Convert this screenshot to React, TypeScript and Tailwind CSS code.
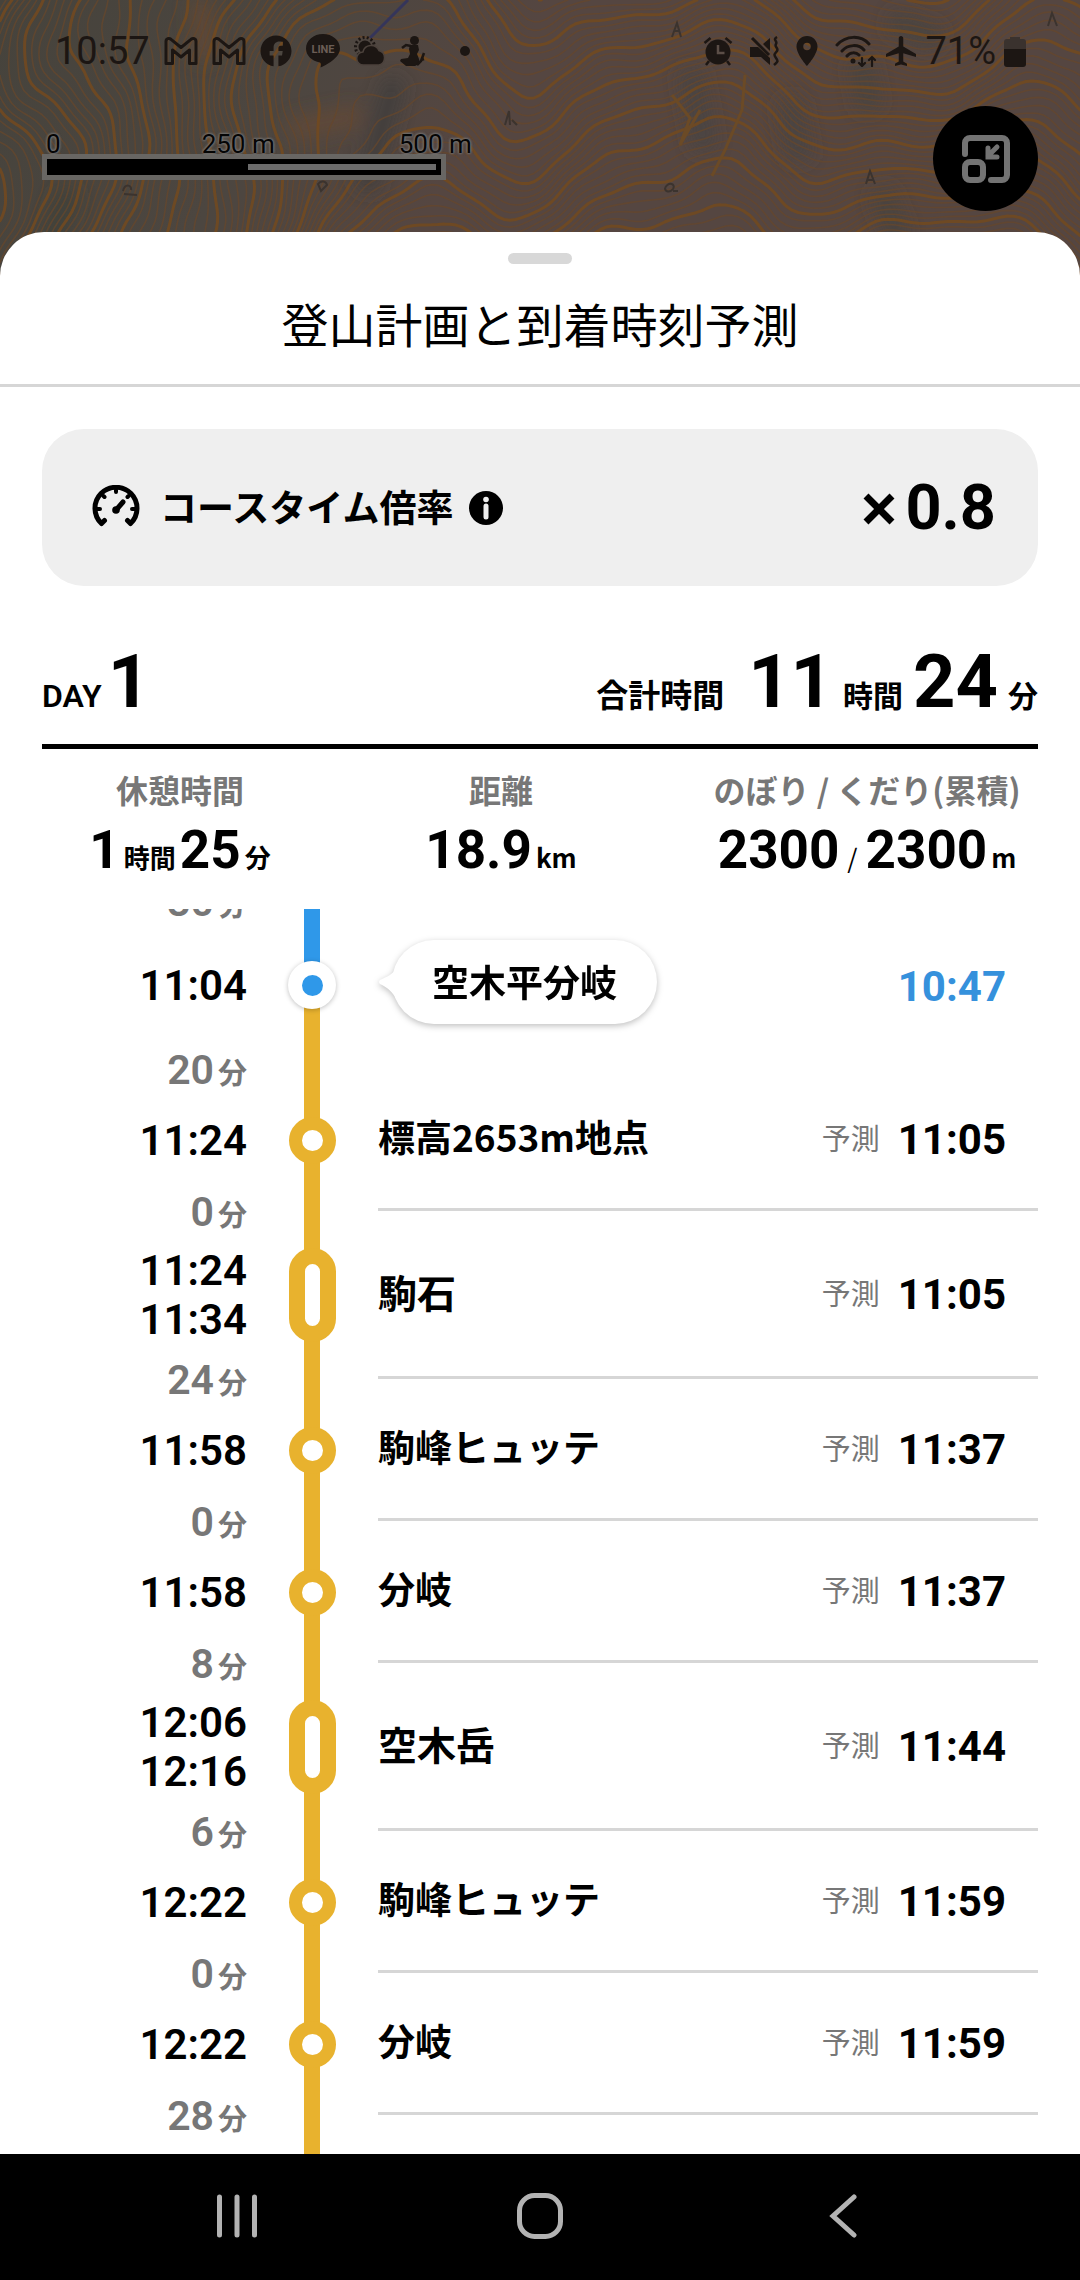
import { FaFacebook } from 'react-icons/fa'
import { MdAirplanemodeActive, MdLocationOn } from 'react-icons/md'

interface Stop {
  name: string
  times: string[]
  eta: string
  minutes: number
  current?: boolean
}

const stops: Stop[] = [
  { name: '空木平分岐', times: ['11:04'], eta: '10:47', minutes: 20, current: true },
  { name: '標高2653m地点', times: ['11:24'], eta: '11:05', minutes: 0 },
  { name: '駒石', times: ['11:24', '11:34'], eta: '11:05', minutes: 24 },
  { name: '駒峰ヒュッテ', times: ['11:58'], eta: '11:37', minutes: 0 },
  { name: '分岐', times: ['11:58'], eta: '11:37', minutes: 8 },
  { name: '空木岳', times: ['12:06', '12:16'], eta: '11:44', minutes: 6 },
  { name: '駒峰ヒュッテ', times: ['12:22'], eta: '11:59', minutes: 0 },
  { name: '分岐', times: ['12:22'], eta: '11:59', minutes: 28 },
]

const MAP_W = 1080
const MAP_H = 276
const STEP = 6

// ridges run north-south on the west side, and fan out to the east
function elevation(x: number, y: number): number {
  const t = Math.min(1, Math.max(0, (x - 180) / 380))
  const k = t * t * (3 - 2 * t)
  const west = x / 8 + 2.2 * Math.sin(y / 38) + 2 * Math.sin((x + y) / 47)
  const east =
    y / 7 + 28 + 3.6 * Math.sin(x / 52 + y / 150) + 1.4 * Math.sin(x / 23 + 1) + 3 * Math.cos((x - y) / 95)
  return west * (1 - k) + east * k + 0.4 * Math.sin(x / 11) * Math.sin(y / 13)
}

// marching squares, one path for every level
function contour(level: number): string {
  let d = ''
  for (let x = 0; x < MAP_W; x += STEP) {
    for (let y = 0; y < MAP_H; y += STEP) {
      const corners = [
        [x, y],
        [x + STEP, y],
        [x + STEP, y + STEP],
        [x, y + STEP],
      ]
      const points: string[] = []
      for (let i = 0; i < 4; i++) {
        const [ax, ay] = corners[i]
        const [bx, by] = corners[(i + 1) % 4]
        const a = elevation(ax, ay) - level
        const b = elevation(bx, by) - level
        if (a < 0 !== b < 0) {
          const f = a / (a - b)
          points.push(`${(ax + (bx - ax) * f).toFixed(1)} ${(ay + (by - ay) * f).toFixed(1)}`)
        }
      }
      if (points.length >= 2) d += `M${points[0]}L${points[1]}`
    }
  }
  return d
}

const levels = Array.from({ length: 96 }, (_, i) => ({ major: i % 5 === 0, d: contour(i - 8) }))

function TopoMap() {
  return (
    <svg
      className="absolute inset-0 h-full w-full"
      viewBox={`0 0 ${MAP_W} ${MAP_H}`}
      preserveAspectRatio="xMidYMin slice"
      fill="none"
      aria-hidden="true"
    >
      <defs>
        <linearGradient id="ground" x1="0" y1="0" x2="1" y2="0.15">
          <stop offset="0" stopColor="#46433c" />
          <stop offset="0.3" stopColor="#4c4640" />
          <stop offset="0.5" stopColor="#554641" />
          <stop offset="1" stopColor="#554641" />
        </linearGradient>
        <filter id="soft" x="-50%" y="-50%" width="200%" height="200%">
          <feGaussianBlur stdDeviation="9" />
        </filter>
      </defs>
      <rect width={MAP_W} height={MAP_H} fill="url(#ground)" />
      <g filter="url(#soft)" strokeWidth="22" strokeOpacity="0.7">
        <path d="M395 80 365 190" stroke="#3a3c3a" />
        <path d="M70 190 40 276" stroke="#3b4038" />
        <path d="M690 70 705 150M790 100 800 160" stroke="#444343" />
        <path d="M890 20 940 40M860 60 870 110M880 190 900 240" stroke="#42423f" />
        <path d="M290 130 360 115M200 0 205 60" stroke="#664a35" />
      </g>
      {levels.map(({ major, d }, i) => (
        <path
          key={i}
          d={d}
          stroke={major ? '#714920' : '#66472c'}
          strokeWidth={major ? 3 : 1.6}
          strokeOpacity={major ? 0.9 : 0.75}
          strokeLinecap="round"
        />
      ))}
      <path d="M672 95 690 118 680 145 700 110M745 75 742 110 725 150 712 176" stroke="#6b4a26" strokeWidth="3" />
      <path d="M408 0 370 38" stroke="#35355a" strokeWidth="3" />
      <g stroke="#3b332e" strokeWidth="2">
        <path d="m672 37 5-14 4 14M674 31h5M866 184l4-13 5 13M868 180h5M1048 26l4-13 5 13M505 125l4-14 1 14M512 120l5 5" />
        <path d="M665 188c4-7 11-4 8 1-3 4-8 3-8-1m8 3h5M123 191c2-8 9-6 8-1m-7 4 13 1M318 184c3-4 8-3 9 1l-6 6Z" />
      </g>
    </svg>
  )
}

function GmailIcon() {
  return (
    <svg className="h-7 w-[34px]" viewBox="0 0 34 28" fill="none" stroke="currentColor" strokeWidth="3" aria-hidden="true">
      <path d="M2 4.5C2 1.500 5 .8 7 2.300L17 10.500 27 2.300C29 .8 32 1.500 32 4.500V26.500H25.500V13L17 20 8.500 13V26.500H2Z" strokeLinejoin="round" />
    </svg>
  )
}

function LineIcon() {
  return (
    <svg className="h-[34px] w-[34px]" viewBox="0 0 34 34" aria-hidden="true">
      <path d="M17 0C7.600 0 0 6.300 0 14.500c0 7 5.800 12.300 13 13.800 2.300.5 2 2.200 1.600 5.200 5-2.300 19.400-9.500 19.400-19C34 6.300 26.400 0 17 0Z" fill="currentColor" />
      <text x="17" y="19" textAnchor="middle" fill="#6b5d55" className="font-['Roboto',sans-serif] text-[11px] font-bold">
        LINE
      </text>
    </svg>
  )
}

function WeatherIcon() {
  return (
    <svg className="h-[30px] w-8" viewBox="0 0 32 30" fill="currentColor" aria-hidden="true">
      <circle cx="11" cy="11" r="9.500" fill="none" stroke="currentColor" strokeWidth="3" strokeDasharray="2 2.200" />
      <circle cx="11" cy="11" r="6.500" />
      <path d="M9.500 29a6.500 6.500 0 0 1-.6-13 8.500 8.500 0 0 1 16-1.500A7.500 7.500 0 0 1 25 29Z" stroke="#4c423c" strokeWidth="1.500" />
    </svg>
  )
}

function HikerIcon() {
  return (
    <svg className="h-[30px] w-[26px]" viewBox="0 0 26 30" fill="currentColor" aria-hidden="true">
      <circle cx="14.500" cy="4.500" r="4.500" />
      <path d="M10 9h8l1 5-2 4 2 5c1 4-1 6-4 7H6l-6-5 1-2 7-1 2-4-1-5Z" />
      <path d="m11 10-5-1-4 3M17 29l4-4 3-8M21 24l3-1" fill="none" stroke="currentColor" strokeWidth="2.500" />
    </svg>
  )
}

function AlarmIcon() {
  return (
    <svg className="h-[30px] w-[30px]" viewBox="0 0 30 30" fill="none" stroke="currentColor" strokeWidth="2.500" aria-hidden="true">
      <circle cx="15" cy="16" r="12.500" fill="currentColor" stroke="none" />
      <path d="m1.500 7 6-5M28.500 7l-6-5M6 25l-3 4M24 25l3 4" />
      <path d="M15 9v8h6.500" stroke="#5b4e47" />
    </svg>
  )
}

function MuteIcon() {
  return (
    <svg className="h-[30px] w-[30px]" viewBox="0 0 30 30" fill="currentColor" aria-hidden="true">
      <path d="M1 11h8l12 11v7l-9-8H1ZM21 2v13l-7-7Z" />
      <path d="m3 2 17 17" fill="none" stroke="currentColor" strokeWidth="3" />
      <path d="M28 1c-5 3 1 4-1 7s3 4 1 7-4 3-1 7 1 4-2 7" fill="none" stroke="currentColor" strokeWidth="2.500" />
    </svg>
  )
}

function WifiIcon() {
  return (
    <svg className="h-8 w-[42px]" viewBox="0 0 42 32" fill="none" stroke="currentColor" strokeWidth="3" strokeLinecap="round" aria-hidden="true">
      <path d="M2 10C11 0 26 0 34 9M7 16c6-7 17-7 22-1M12 21c3-4 9-4 12-1" />
      <circle cx="18" cy="26" r="1" fill="currentColor" />
      <path d="M27 23v8m-3-3 3 3 3-3M37 31v-9m-3 3 3-3 3 3" strokeWidth="2.200" />
    </svg>
  )
}

function BatteryIcon() {
  return (
    <svg className="h-[31px] w-[22px]" viewBox="0 0 22 31" aria-hidden="true">
      <path d="M6 3V1h10v2h3a3 3 0 0 1 3 3v8H0V6a3 3 0 0 1 3-3Z" fill="#3a322e" />
      <path d="M0 13h22v15a3 3 0 0 1-3 3H3a3 3 0 0 1-3-3Z" fill="currentColor" />
    </svg>
  )
}

function StatusBar() {
  return (
    <div className="relative flex h-[102px] items-center justify-between pr-[54px] pl-[55px] font-['Roboto',sans-serif] text-[38px] text-[#1c1613]">
      <div className="flex items-center gap-3.5">
        <span>10:57</span>
        <GmailIcon />
        <GmailIcon />
        <FaFacebook className="h-8 w-8" />
        <LineIcon />
        <WeatherIcon />
        <HikerIcon />
        <span className="ml-5 h-2.5 w-2.5 rounded-full bg-current" />
      </div>
      <div className="flex items-center gap-2">
        <div className="flex items-center gap-4">
          <AlarmIcon />
          <MuteIcon />
          <MdLocationOn className="-mx-1.5 h-9 w-9" />
          <WifiIcon />
        </div>
        <MdAirplanemodeActive className="-mx-0.5 h-9 w-9" />
        <span>71%</span>
        <BatteryIcon />
      </div>
    </div>
  )
}

function ScaleBar() {
  return (
    <div className="font-['Roboto',sans-serif] text-[26px] leading-5 text-[#050505] [text-shadow:0_0_3px_#777,0_0_3px_#777,0_0_2px_#777]">
      <div className="flex pl-1">
        <span>0</span>
        <span className="ml-[141px]">250 m</span>
        <span className="ml-[124px]">500 m</span>
      </div>
      <div className="h-[26px] w-[404px] bg-[#686663] p-[5px]">
        <div className="flex h-4 justify-end bg-black p-[5px]">
          <div className="h-1.5 w-[188px] bg-[#6c6c6c]" />
        </div>
      </div>
    </div>
  )
}

function GaugeIcon() {
  return (
    <svg className="h-[42px] w-12" viewBox="0 0 48 42" fill="none" stroke="currentColor" strokeWidth="5" strokeLinecap="round" aria-hidden="true">
      <path d="M9.500 38.500a21 21 0 1 1 29 0M9.500 38.500l3-3M38.500 38.500l-3-3" />
      <path d="M24 5v2M11.500 11l1 1M36.500 11l-1 1M5 24h3M43 24h-3" strokeWidth="4" />
      <path d="m31 17-6 7" strokeWidth="5" />
      <circle cx="24" cy="25" r="3.800" fill="currentColor" stroke="none" />
    </svg>
  )
}

function InfoIcon() {
  return (
    <svg className="h-[34px] w-[34px]" viewBox="0 0 34 34" aria-hidden="true">
      <circle cx="17" cy="17" r="17" fill="#000" />
      <path d="M17 15v11" stroke="#efefef" strokeWidth="5" strokeLinecap="round" />
      <circle cx="17" cy="8.500" r="2.800" fill="#efefef" />
    </svg>
  )
}

function Num({ children }: { children: string }) {
  return <span className="font-['Roboto',sans-serif] text-[53px] font-bold">{children}</span>
}

function Marker({ stop }: { stop: Stop }) {
  if (stop.current) {
    return (
      <span className="flex h-12 w-12 items-center justify-center rounded-full bg-white shadow-[0_1px_5px_rgba(0,0,0,0.25)]">
        <span className="h-[21px] w-[21px] rounded-full bg-[#2f98e9]" />
      </span>
    )
  }
  if (stop.times.length > 1) {
    return <span className="h-[94px] w-[47px] rounded-full border-[16px] border-[#e8b22e] bg-white" />
  }
  return <span className="h-[47px] w-[47px] rounded-full border-[13px] border-[#e8b22e] bg-white" />
}

function Minutes({ value }: { value: number }) {
  return (
    <div className="absolute top-full left-0 flex w-[205px] -translate-y-1/2 items-baseline justify-end gap-1 pt-0.5 leading-[48px] text-[#777]">
      <span className="font-['Roboto',sans-serif] text-[41px] font-semibold">{value}</span>
      <span className="text-[29px] font-bold">分</span>
    </div>
  )
}

function StopRow({ stop }: { stop: Stop }) {
  const tall = stop.times.length > 1
  return (
    <li className={stop.current || tall ? 'relative flex h-[168px] shrink-0' : 'relative flex h-[142px] shrink-0'}>
      <div className="flex w-[205px] flex-col justify-center text-right font-['Roboto',sans-serif] text-[42px] leading-[49px] font-semibold">
        {stop.times.map((time) => (
          <time key={time}>{time}</time>
        ))}
      </div>
      <div className="ml-[41px] grid w-12 place-items-center">
        <div className="col-start-1 row-start-1 flex h-full w-4 flex-col">
          <span className={stop.current ? 'flex-1 bg-[#2f98e9]' : 'flex-1 bg-[#e8b22e]'} />
          <span className="flex-1 bg-[#e8b22e]" />
        </div>
        <div className="z-10 col-start-1 row-start-1 flex">
          <Marker stop={stop} />
        </div>
      </div>
      {stop.current ? (
        <div className="ml-[42px] flex flex-1 items-center justify-between pr-8">
          <div className="flex items-center pb-1.5 drop-shadow-[0_2px_3px_rgba(0,0,0,0.25)]">
            <svg className="-mr-1 h-8 w-[18px]" viewBox="0 0 18 32" fill="#fff" aria-hidden="true">
              <path d="M18 2C15 9 8 11 2 14q-2 2 0 4c6 3 10 5 16 14Z" />
            </svg>
            <span className="flex h-[84px] items-center rounded-full bg-white px-10 text-[37px] font-bold">{stop.name}</span>
          </div>
          <time className="pt-0.5 font-['Roboto',sans-serif] text-[42px] font-bold text-[#3591dc]">{stop.eta}</time>
        </div>
      ) : (
        <div className="ml-[42px] flex flex-1 items-center justify-between border-b-[3px] border-[#d6d6d6] pr-8">
          <span className={tall ? 'pb-1 text-[39px] font-bold' : 'pb-1 text-[37px] font-bold'}>{stop.name}</span>
          <div className="flex items-center gap-[18px]">
            <span className="pb-0.5 text-[29px] font-normal text-[#777]">予測</span>
            <time className="pt-0.5 font-['Roboto',sans-serif] text-[42px] font-bold">{stop.eta}</time>
          </div>
        </div>
      )}
      <Minutes value={stop.minutes} />
    </li>
  )
}

function NavBar() {
  return (
    <nav className="grid h-[126px] shrink-0 grid-cols-3 bg-black px-[85px] pb-0.5 text-[#b3b3b3]">
      <button type="button" aria-label="履歴" className="flex items-center justify-center">
        <svg className="h-11 w-11" viewBox="0 0 44 44" stroke="currentColor" strokeWidth="5" strokeLinecap="round">
          <path d="M4.500 3v38M22 3v38M39.500 3v38" />
        </svg>
      </button>
      <button type="button" aria-label="ホーム" className="flex items-center justify-center">
        <svg className="h-12 w-12" viewBox="0 0 48 48" fill="none" stroke="currentColor" strokeWidth="5">
          <rect x="3.500" y="3.500" width="41" height="41" rx="15" />
        </svg>
      </button>
      <button type="button" aria-label="戻る" className="flex items-center justify-center">
        <svg className="h-11 w-7" viewBox="0 0 28 44" fill="none" stroke="currentColor" strokeWidth="5" strokeLinecap="round">
          <path d="M25 3 4 22l21 19" />
        </svg>
      </button>
    </nav>
  )
}

export default function App() {
  return (
    <div className="flex h-screen flex-col bg-white font-['Noto_Sans_CJK_JP',sans-serif] text-black" lang="ja">
      <header className="relative h-[276px] shrink-0 overflow-hidden">
        <TopoMap />
        <StatusBar />
        <div className="relative flex items-start justify-between px-[42px]">
          <div className="pt-8">
            <ScaleBar />
          </div>
          <button type="button" aria-label="地図を縮小" className="mt-1 flex h-[105px] w-[105px] items-center justify-center rounded-full bg-black text-[#737373]">
            <svg className="h-[50px] w-[50px]" viewBox="0 0 50 50" fill="none" stroke="currentColor" strokeWidth="6" strokeLinecap="round">
              <path d="M4 20V9a5 5 0 0 1 5-5h32a5 5 0 0 1 5 5v32a5 5 0 0 1-5 5H30" />
              <rect x="4" y="28" width="18" height="18" rx="5" />
              <path d="M36 13 27 22M27 14v9h9" strokeWidth="5" />
            </svg>
          </button>
        </div>
      </header>

      <main className="relative -mt-11 flex min-h-0 flex-1 flex-col rounded-t-[44px] bg-white">
        <div className="flex h-[155px] shrink-0 flex-col items-center border-b-[3px] border-[#d6d6d6] pt-[21px]">
          <span className="h-[11px] w-16 rounded-md bg-[#d8d8d8]" />
          <h1 className="mt-6 text-[47px] leading-[70px]">登山計画と到着時刻予測</h1>
        </div>

        <section className="mx-[42px] mt-[42px] flex h-[157px] shrink-0 items-center justify-between rounded-[42px] bg-[#efefef] pr-[42px] pl-[50px]">
          <div className="flex items-center">
            <div className="flex items-center gap-5 pb-1">
              <GaugeIcon />
              <span className="text-[37px] leading-[48px] font-bold">コースタイム倍率</span>
            </div>
            <button type="button" aria-label="コースタイム倍率について" className="ml-4">
              <InfoIcon />
            </button>
          </div>
          <div className="flex items-center gap-2.5 pt-0.5 font-['Roboto',sans-serif] text-[63px] font-bold">
            <svg className="h-8 w-8" viewBox="0 0 32 32" stroke="currentColor" strokeWidth="7" role="img" aria-label="かける">
              <path d="m3 3 26 26M29 3 3 29" />
            </svg>
            <span>0.8</span>
          </div>
        </section>

        <section className="mx-[42px] shrink-0">
          <div className="mt-[42px] flex h-[121px] items-baseline justify-between border-b-[5px] border-black leading-[108px] font-bold">
            <h2 className="flex items-baseline gap-1.5">
              <span className="font-['Roboto',sans-serif] text-[32px] font-semibold">DAY</span>
              <span className="font-['Roboto',sans-serif] text-[74px]">1</span>
            </h2>
            <div className="flex items-baseline gap-2.5 text-[30px]">
              <span className="mr-3.5 text-[32px]">合計時間</span>
              <span className="font-['Roboto',sans-serif] text-[74px]">11</span>
              <span>時間</span>
              <span className="font-['Roboto',sans-serif] text-[74px]">24</span>
              <span>分</span>
            </div>
          </div>
          <dl className="grid h-[160px] grid-cols-[276px_1fr_342px] pt-4 text-center text-[26px] font-bold">
            <div>
              <dt className="text-[32px] leading-[48px] text-[#777]">休憩時間</dt>
              <dd className="flex items-baseline justify-center gap-1 leading-[74px]">
                <Num>1</Num>時間<Num>25</Num>分
              </dd>
            </div>
            <div className="pr-3">
              <dt className="text-[32px] leading-[48px] text-[#777]">距離</dt>
              <dd className="flex items-baseline justify-center gap-1 leading-[74px]">
                <Num>18.9</Num>km
              </dd>
            </div>
            <div>
              <dt className="text-[32px] leading-[48px] text-[#777]">のぼり / くだり(累積)</dt>
              <dd className="flex items-baseline justify-center gap-1 leading-[74px]">
                <Num>2300</Num>
                <span className="px-1 font-normal">/</span>
                <Num>2300</Num>m
              </dd>
            </div>
          </dl>
        </section>

        <section className="mx-[42px] min-h-0 flex-1 overflow-hidden">
          <ol className="-mt-2 flex h-[calc(100%+8px)] flex-col">
            <li className="relative h-0">
              <Minutes value={30} />
            </li>
            {stops.map((stop, i) => (
              <StopRow key={i} stop={stop} />
            ))}
            <li className="ml-[262px] w-4 grow bg-[#e8b22e]" />
          </ol>
        </section>
      </main>

      <NavBar />
    </div>
  )
}
